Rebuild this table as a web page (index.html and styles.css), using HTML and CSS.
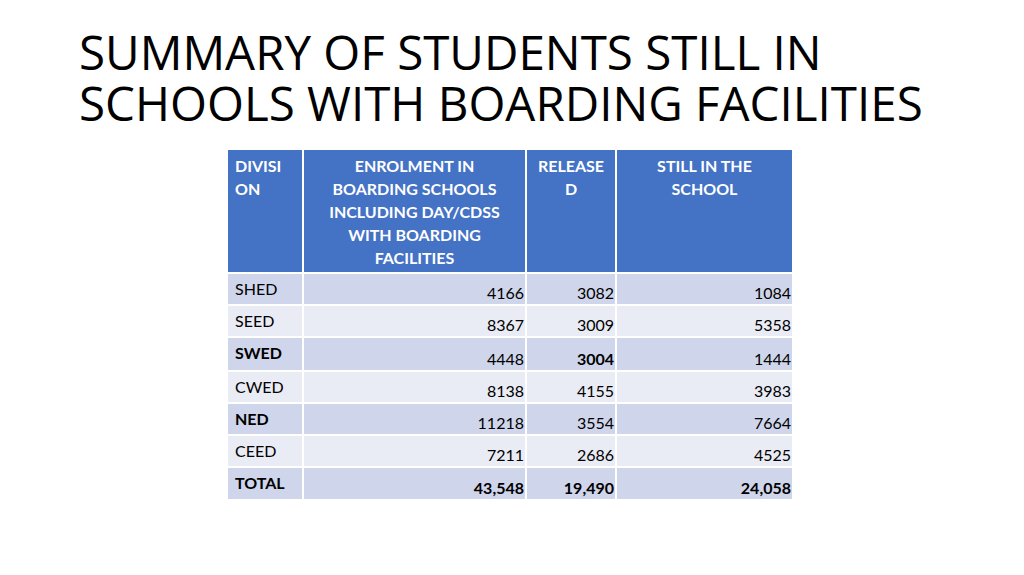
FILE: index.html
```html
<!DOCTYPE html>
<html lang="en">
<head>
  <meta charset="UTF-8">
  <title>Summary of Students</title>
  <link rel="stylesheet" href="styles.css">
</head>
<body>

<div class="slide">
  <h1 class="title">
    <span class="line">SUMMARY OF STUDENTS STILL IN</span>
    <span class="line">SCHOOLS WITH BOARDING FACILITIES</span>
  </h1>

  <table class="summary">
    <colgroup>
      <col class="c-div">
      <col class="c-enrol">
      <col class="c-rel">
      <col class="c-still">
    </colgroup>
    <tr class="head">
      <th class="left">DIVISI<br>ON</th>
      <th>ENROLMENT IN<br>BOARDING SCHOOLS<br>INCLUDING DAY/CDSS<br>WITH BOARDING<br>FACILITIES</th>
      <th>RELEASE<br>D</th>
      <th>STILL IN THE<br>SCHOOL</th>
    </tr>
    <tr class="odd">
      <td class="label">SHED</td>
      <td class="num">4166</td>
      <td class="num">3082</td>
      <td class="num">1084</td>
    </tr>
    <tr class="even">
      <td class="label">SEED</td>
      <td class="num">8367</td>
      <td class="num">3009</td>
      <td class="num">5358</td>
    </tr>
    <tr class="odd tall">
      <td class="label bold">SWED</td>
      <td class="num">4448</td>
      <td class="num bold">3004</td>
      <td class="num">1444</td>
    </tr>
    <tr class="even">
      <td class="label">CWED</td>
      <td class="num">8138</td>
      <td class="num">4155</td>
      <td class="num">3983</td>
    </tr>
    <tr class="odd">
      <td class="label bold">NED</td>
      <td class="num">11218</td>
      <td class="num">3554</td>
      <td class="num">7664</td>
    </tr>
    <tr class="even">
      <td class="label">CEED</td>
      <td class="num">7211</td>
      <td class="num">2686</td>
      <td class="num">4525</td>
    </tr>
    <tr class="odd total">
      <td class="label bold">TOTAL</td>
      <td class="num bold">43,548</td>
      <td class="num bold">19,490</td>
      <td class="num bold">24,058</td>
    </tr>
  </table>
</div>

</body>
</html>
```

FILE: styles.css
```css
body {
  margin: 0;
  padding: 0;
  background-color: #ffffff;
  font-family: "Lato", "Liberation Sans", sans-serif;
  color: #000;
}
.slide {
  width: 1024px;
  height: 575px;
  overflow: hidden;
}
.title {
  font-family: "Open Sans", "Noto Sans", sans-serif;
  font-weight: 400;
  font-size: 47.5px;
  margin: 26px 0 0 79px;
  color: #000;
  white-space: nowrap;
}
.title .line {
  display: block;
  height: 51px;
  line-height: 51px;
}
.summary {
  margin: 20px 0 0 226px;
  border-collapse: separate;
  border-spacing: 2px;
  table-layout: fixed;
  width: 568px;
  font-size: 16px;
  line-height: 20px;
}
.c-div { width: 74px; }
.c-enrol { width: 221px; }
.c-rel { width: 88px; }
.c-still { width: 175px; }

.summary th,
.summary td {
  box-sizing: border-box;
}
.head th {
  background-color: #4472c4;
  color: #fff;
  font-weight: 700;
  line-height: 23px;
  text-align: center;
  vertical-align: top;
  height: 122px;
  padding: 4px 6px 0 6px;
}
.head th.left {
  text-align: left;
  padding-left: 7px;
}
.odd td { background-color: #cfd5ea; }
.even td { background-color: #e9ebf5; }

.summary td {
  height: 30px;
}
.tall td { height: 32px; }
.total td { height: 31px; }

.label {
  vertical-align: top;
  text-align: left;
  padding: 5px 4px 0 7px;
}
.num {
  vertical-align: bottom;
  text-align: right;
  padding: 0 1px 1px 4px;
}
.bold {
  font-weight: 700;
}
```
